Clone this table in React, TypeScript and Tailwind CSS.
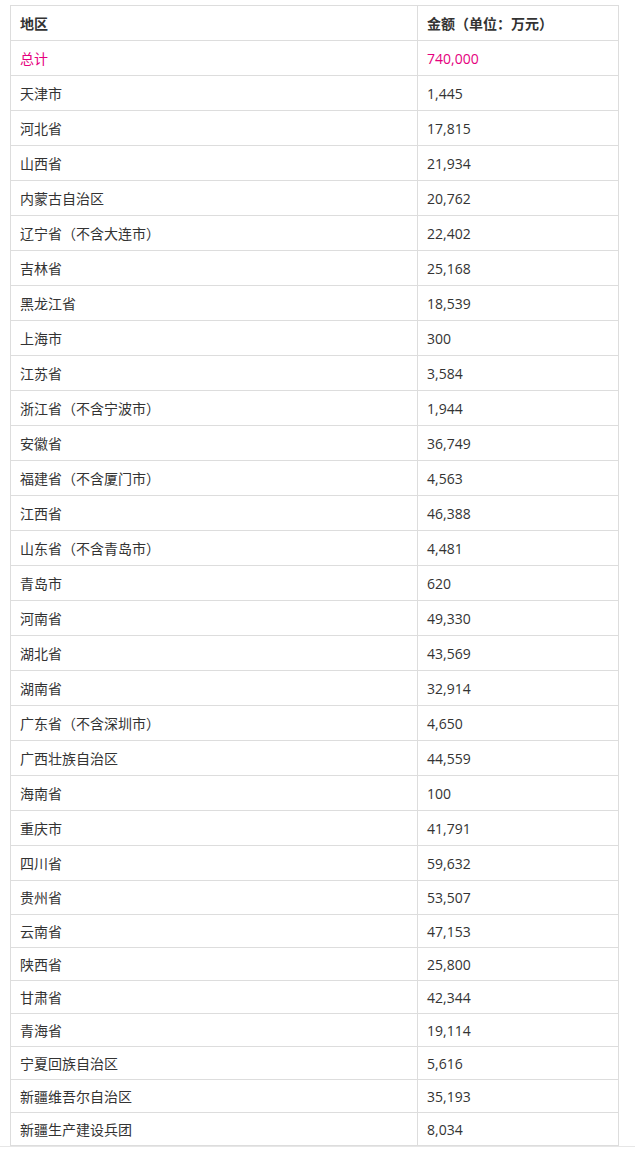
const rows: [string, string, number][] = [
  ["天津市", "1,445", 35],
  ["河北省", "17,815", 35],
  ["山西省", "21,934", 35],
  ["内蒙古自治区", "20,762", 35],
  ["辽宁省（不含大连市）", "22,402", 35],
  ["吉林省", "25,168", 35],
  ["黑龙江省", "18,539", 35],
  ["上海市", "300", 35],
  ["江苏省", "3,584", 35],
  ["浙江省（不含宁波市）", "1,944", 35],
  ["安徽省", "36,749", 35],
  ["福建省（不含厦门市）", "4,563", 35],
  ["江西省", "46,388", 35],
  ["山东省（不含青岛市）", "4,481", 35],
  ["青岛市", "620", 35],
  ["河南省", "49,330", 35],
  ["湖北省", "43,569", 35],
  ["湖南省", "32,914", 35],
  ["广东省（不含深圳市）", "4,650", 35],
  ["广西壮族自治区", "44,559", 35],
  ["海南省", "100", 35],
  ["重庆市", "41,791", 35],
  ["四川省", "59,632", 35],
  ["贵州省", "53,507", 34],
  ["云南省", "47,153", 33],
  ["陕西省", "25,800", 33],
  ["甘肃省", "42,344", 33],
  ["青海省", "19,114", 33],
  ["宁夏回族自治区", "5,616", 33],
  ["新疆维吾尔自治区", "35,193", 33],
  ["新疆生产建设兵团", "8,034", 33],
];

function Row({
  region,
  amount,
  h,
  className = "",
}: {
  region: string;
  amount: string;
  h: number;
  className?: string;
}) {
  return (
    <div className={`flex border-b border-[#dddddd] ${className}`} style={{ height: h }}>
      <div className="w-[407px] flex items-center pl-[9px] border-r border-[#dddddd]">{region}</div>
      <div className="w-[201px] flex items-center pl-[9px] border-r border-[#dddddd]">{amount}</div>
    </div>
  );
}

export default function App() {
  return (
    <div
      className="bg-white text-[14px] text-[#333333] w-[635px] pt-[5px] border-b border-[#e6e6e6]"
      style={{ fontFamily: '"Open Sans", "Noto Sans CJK SC", sans-serif' }}
    >
      <div className="ml-[10px] w-[609px] border-l border-t border-[#dddddd]">
        <Row region="地区" amount="金额（单位：万元）" h={35} className="font-bold" />
        <Row region="总计" amount="740,000" h={35} className="text-[#e5007e]" />
        {rows.map(([region, amount, h]) => (
          <Row key={region} region={region} amount={amount} h={h} />
        ))}
      </div>
    </div>
  );
}
